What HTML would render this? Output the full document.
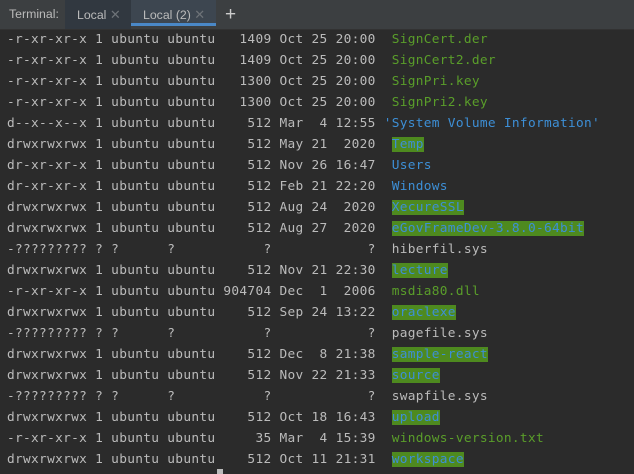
<!DOCTYPE html>
<html><head><meta charset="utf-8"><style>
body{margin:0;width:634px;height:474px;overflow:hidden;background:#2b2b2b;font-family:"DejaVu Sans Mono","Liberation Mono",monospace;}
.bar{position:absolute;left:0;top:0;width:634px;height:29px;background:#3c3f41;border-bottom:1px solid #323232;font-family:"Liberation Sans",sans-serif;font-size:12.3px;color:#bbbbbb}
.bar div{position:absolute;top:0;height:29px;line-height:29px}
.x{color:#6e7378;font-size:13px}
pre{position:absolute;left:7px;top:29px;margin:0;font-family:"DejaVu Sans Mono","Liberation Mono",monospace;font-size:12.8px;letter-spacing:0.31px;line-height:21px;color:#bbbbbb}
.g{color:#5a9e2a}.b{color:#3d8fd6}.h{color:#3d8fd6;background:#4e8a1f}
</style></head><body>
<div class="bar">
<div style="left:9px">Terminal:</div>
<div style="left:65px;width:66px;background:#313840;padding-left:12px;box-sizing:border-box">Local <span class="x">✕</span></div>
<div style="left:131px;width:85px;background:#3d4650;padding-left:12px;box-sizing:border-box;border-bottom:3px solid #4a88c7;height:26px">Local (2) <span class="x">✕</span></div>
<div style="left:225px;font-size:19px;color:#ccc">+</div>
</div>
<pre>-r-xr-xr-x 1 ubuntu ubuntu   1409 Oct 25 20:00  <span class="g">SignCert.der</span>
-r-xr-xr-x 1 ubuntu ubuntu   1409 Oct 25 20:00  <span class="g">SignCert2.der</span>
-r-xr-xr-x 1 ubuntu ubuntu   1300 Oct 25 20:00  <span class="g">SignPri.key</span>
-r-xr-xr-x 1 ubuntu ubuntu   1300 Oct 25 20:00  <span class="g">SignPri2.key</span>
d--x--x--x 1 ubuntu ubuntu    512 Mar  4 12:55 <span class="b">'System Volume Information'</span>
drwxrwxrwx 1 ubuntu ubuntu    512 May 21  2020  <span class="h">Temp</span>
dr-xr-xr-x 1 ubuntu ubuntu    512 Nov 26 16:47  <span class="b">Users</span>
dr-xr-xr-x 1 ubuntu ubuntu    512 Feb 21 22:20  <span class="b">Windows</span>
drwxrwxrwx 1 ubuntu ubuntu    512 Aug 24  2020  <span class="h">XecureSSL</span>
drwxrwxrwx 1 ubuntu ubuntu    512 Aug 27  2020  <span class="h">eGovFrameDev-3.8.0-64bit</span>
-????????? ? ?      ?           ?            ?  hiberfil.sys
drwxrwxrwx 1 ubuntu ubuntu    512 Nov 21 22:30  <span class="h">lecture</span>
-r-xr-xr-x 1 ubuntu ubuntu 904704 Dec  1  2006  <span class="g">msdia80.dll</span>
drwxrwxrwx 1 ubuntu ubuntu    512 Sep 24 13:22  <span class="h">oraclexe</span>
-????????? ? ?      ?           ?            ?  pagefile.sys
drwxrwxrwx 1 ubuntu ubuntu    512 Dec  8 21:38  <span class="h">sample-react</span>
drwxrwxrwx 1 ubuntu ubuntu    512 Nov 22 21:33  <span class="h">source</span>
-????????? ? ?      ?           ?            ?  swapfile.sys
drwxrwxrwx 1 ubuntu ubuntu    512 Oct 18 16:43  <span class="h">upload</span>
-r-xr-xr-x 1 ubuntu ubuntu     35 Mar  4 15:39  <span class="g">windows-version.txt</span>
drwxrwxrwx 1 ubuntu ubuntu    512 Oct 11 21:31  <span class="h">workspace</span></pre>
<div style="position:absolute;left:217px;top:469px;width:6px;height:5px;background:#bbbbbb"></div>
</body></html>
